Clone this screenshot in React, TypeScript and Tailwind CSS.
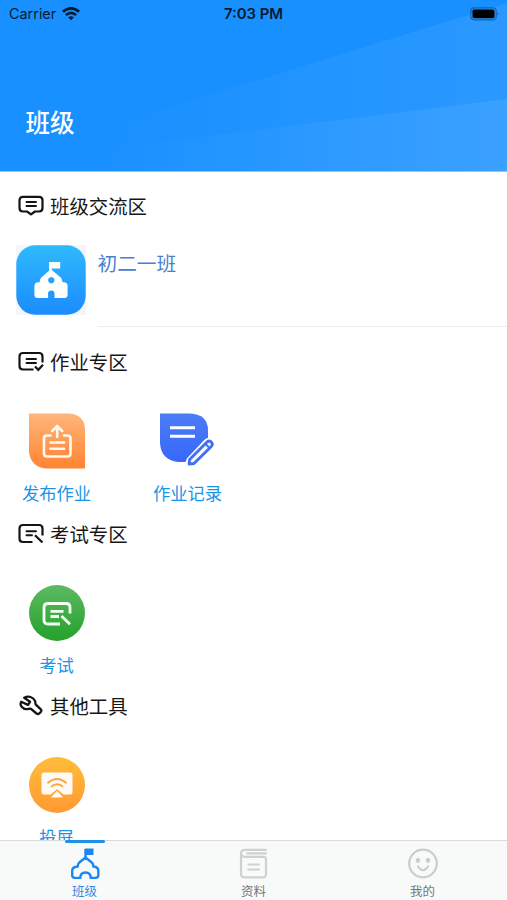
import type { ReactNode } from "react";

type Tool = {
  name: string;
  icon: ReactNode;
};

type ToolSection = {
  title: string;
  icon: ReactNode;
  tools: Tool[];
};

// Small outline icons in front of the section titles
const ChatIcon = () => (
  <svg width="26" height="22" viewBox="0 0 26 22" fill="none" stroke="#141414" strokeWidth="2.200" strokeLinejoin="round" strokeLinecap="round">
    <path d="M5 1.800h16q3.500 0 3.500 3.500v7.700q0 3.500-3.500 3.500h-4L13 19.400 9 16.500H5q-3.500 0-3.500-3.500V5.300Q1.500 1.800 5 1.800Z" />
    <path d="M8.500 7h9.500M8.500 11h9.500" strokeWidth="1.900" />
  </svg>
);

const HomeworkIcon = () => (
  <svg width="26" height="22" viewBox="0 0 26 22" fill="none" stroke="#141414" strokeWidth="2.200" strokeLinejoin="round">
    <path d="M24.500 11.500V5.500q0-3.500-3.500-3.500H5Q1.500 2 1.500 5.500v9.500q0 3.500 3.500 3.500h10.500" />
    <path d="M8.500 8h9.500M8.500 12h9.500" strokeWidth="1.900" strokeLinecap="round" />
    <path d="M17 15.500l3.300 3.300 4.700-5" strokeLinejoin="miter" />
  </svg>
);

const ExamIcon = () => (
  <svg width="26" height="22" viewBox="0 0 26 22" fill="none" stroke="#141414" strokeWidth="2.200">
    <path d="M24.500 12.500V5.500q0-3.500-3.500-3.500H5Q1.500 2 1.500 5.500v10q0 3.500 3.500 3.500h9.500" />
    <path d="M8.500 8.200h9.500M8.500 12.200h5.500" strokeWidth="1.900" strokeLinecap="round" />
    <path d="M17 12.200l7.500 7.300" />
  </svg>
);

const WrenchIcon = () => (
  <svg width="26" height="22" viewBox="0 0 26 22" fill="none" stroke="#141414" strokeWidth="2.300" strokeLinejoin="round">
    <path d="M6.200 2.700 12 6.800 10 9.900 3.200 6.700C1.200 10.200 4.600 14.400 9 14.100c1.600-.1 2.600-.8 4-.2l5.500 4.600q1.500 1.100 2.800-.1l1.700-1.700q.9-1.400-.4-2.500l-4.800-4.600c-.8-1.200-.1-2.300-.8-3.700C15.300 1.900 10.200 0.600 6.200 2.700Z" />
  </svg>
);

const PublishIcon = () => (
  <svg width="56" height="56" viewBox="0 0 56 56" fill="none">
    <defs>
      <linearGradient id="orange" x1="0" y1="0" x2="0" y2="1">
        <stop offset="0" stopColor="#ffb57c" />
        <stop offset="1" stopColor="#ff8430" />
      </linearGradient>
    </defs>
    <path d="M0 .5h40Q56 2 56 17v38.500H17Q2 54 0 39Z" fill="url(#orange)" />
    <g stroke="#fff8ef" strokeWidth="2.600" strokeLinecap="round" strokeLinejoin="round">
      <path d="M21.500 22.500H18q-3 0-3 3v15q0 3 3 3h20.500q3 0 3-3v-15q0-3-3-3H35" />
      <path d="M28.200 24V13.500M23.200 18l5-5 5 5" />
      <path d="M21.500 29.500h13.500M21.500 35.700h13.500" />
    </g>
  </svg>
);

const RecordIcon = () => (
  <svg width="56" height="56" viewBox="0 0 56 56" fill="none">
    <defs>
      <linearGradient id="indigo" x1="0" y1="0" x2="0" y2="1">
        <stop offset="0" stopColor="#4c7bf7" />
        <stop offset="1" stopColor="#3768fa" />
      </linearGradient>
    </defs>
    <path d="M0 .5h30q18 1 18 17v12L25 49h-7Q1 47 0 30Z" fill="url(#indigo)" />
    <path d="M10 14.700h25M10 23.200h25" stroke="#fff" strokeWidth="3" />
    <path d="M28.500 46.500 45.500 28.500Q49.500 25 52.500 28.500 55 32 52 34.500L35 51.200l-7.500 1Z" fill="#f4f8ff" stroke="#fff" strokeWidth="4" strokeLinejoin="round" />
    <path d="M29.600 46.500 47 29q2.300-2 4.400.1 1.900 2.200-.1 4.300L34 50.500l-4.900.5Z" fill="#f4f8ff" stroke="#406ff0" strokeWidth="2.800" strokeLinejoin="round" />
    <path d="M46 31.500l3 3" stroke="#406ff0" strokeWidth="2" />
  </svg>
);

const ExamBadgeIcon = () => (
  <svg width="56" height="56" viewBox="0 0 56 56" fill="none">
    <defs>
      <linearGradient id="green" x1="0" y1="0" x2="0" y2="1">
        <stop offset="0" stopColor="#5dba63" />
        <stop offset="1" stopColor="#24a12b" />
      </linearGradient>
    </defs>
    <circle cx="28" cy="28" r="28" fill="url(#green)" />
    <g stroke="#f7fff5" strokeWidth="2.800">
      <path d="M41 28.500V22.500q0-4-4-4H19q-4 0-4 4v12.500q0 4 4 4h12" />
      <path d="M21.500 26.300h13M21.500 31.500h8.500" />
      <path d="M32.500 31l8.500 8.200" />
    </g>
  </svg>
);

const CastIcon = () => (
  <svg width="56" height="56" viewBox="0 0 56 56" fill="none">
    <defs>
      <linearGradient id="amber" x1="0" y1="0" x2="0" y2="1">
        <stop offset="0" stopColor="#ffbd3b" />
        <stop offset="1" stopColor="#ff9a32" />
      </linearGradient>
    </defs>
    <circle cx="28" cy="28" r="28" fill="url(#amber)" />
    <path d="M15 15.500h26q2.500 0 2.500 2.500v17q0 2.500-2.500 2.500h-6.500l-6.500-5.200-6.500 5.200H15q-2.500 0-2.500-2.500V18q0-2.500 2.500-2.500Z" fill="#fffaf5" />
    <path d="M28 34.500l5.300 5.500H22.700Z" fill="#fffaf5" stroke="#fffaf5" strokeLinejoin="round" />
    <path d="M18.500 26.200q9.500-8.500 19 0M22 29.800q6-5 12 0" stroke="#f9a83c" strokeWidth="1.900" />
  </svg>
);

const SchoolIcon = () => (
  <svg width="70" height="70" viewBox="0 0 70 70">
    <defs>
      <linearGradient id="sky" x1="0" y1="0" x2="0" y2="1">
        <stop offset="0" stopColor="#2fb9fd" />
        <stop offset="1" stopColor="#1b8cfd" />
      </linearGradient>
    </defs>
    <rect width="70" height="70" fill="#f3f5fa" />
    <rect x=".3" y=".3" width="69.400" height="69.400" rx="19" fill="url(#sky)" />
    <path
      fill="#fff"
      fillRule="evenodd"
      d="M33 17h11.200v6.500h-8.400v1.500l9.200 7.800q1.400 1.500 1.400 4.500h2.200q3 .7 3 4v8.400q0 3.300-3.300 3.300H38.500v-4.500q0-3-3.200-3t-3.200 3V53H21.700q-3.300 0-3.300-3.300v-8.400q0-3.300 3-4h2.200q.1-3 1.500-4.500l7.900-7ZM35.300 32a3.200 3.200 0 1 0 .01 0Z"
    />
  </svg>
);

const WifiIcon = () => (
  <svg width="18" height="14" viewBox="0 0 18 14" fill="none" stroke="#061b30" strokeWidth="2.700">
    <path d="M.9 4.600Q9-2 17.100 4.600M3.900 8q5.100-4.300 10.200 0" />
    <path d="M9 13.200 6.200 10.400q2.800-2.200 5.600 0Z" fill="#061b30" stroke="none" />
  </svg>
);

const BatteryIcon = () => (
  <svg width="30" height="14" viewBox="0 0 30 14" fill="none">
    <rect x=".8" y=".8" width="25.400" height="12" rx="3.500" stroke="#1463af" strokeWidth="1.200" />
    <rect x="2.500" y="2.400" width="22" height="8.800" rx="1.800" fill="#000" />
    <path d="M27.500 5q2 1.800 0 3.600Z" fill="#1463af" />
  </svg>
);

const ClassTabIcon = () => (
  <svg width="30" height="32" viewBox="0 0 30 32" fill="none" stroke="#1c86f2" strokeWidth="2.400" strokeLinejoin="round">
    <path d="M15.500 9.500 9 14.700q-1.200 1.300-1.200 3.800-5.600.4-5.600 4.300v4.500q0 2.600 2.600 2.600h5.500q0-5.400 5.200-5.400t5.200 5.400h5q2.600 0 2.600-2.600v-4.500q0-3.900-5-4.300 0-2.500-1.300-3.800Z" />
    <path d="M15.500 10V1" />
    <path d="M15 .5h8.500v6.500H15Z" fill="#1c86f2" stroke="none" />
  </svg>
);

const MaterialTabIcon = () => (
  <svg width="30" height="32" viewBox="0 0 30 32" fill="none" stroke="#cfd1d1" strokeWidth="2.200" strokeLinecap="round" strokeLinejoin="round">
    <path d="M27 1.800H6Q2 1.800 2 5.300T6 8.800h18.500Q27 8.800 27 11.300v15q0 3-3 3H5q-3 0-3-3V5.300M8 5.300h19" />
    <path d="M9.500 16.500h10.500M9.500 21.500h10.500" />
  </svg>
);

const ProfileTabIcon = () => (
  <svg width="30" height="32" viewBox="0 0 30 32" fill="none" stroke="#cbcdcd" strokeWidth="2.200">
    <circle cx="15" cy="15.500" r="13.800" />
    <ellipse cx="10" cy="12.300" rx="2.200" ry="2.600" fill="#cbcdcd" stroke="none" />
    <ellipse cx="20" cy="12.300" rx="2.200" ry="2.600" fill="#cbcdcd" stroke="none" />
    <path d="M10 18.500q5 7.500 10 0" strokeLinecap="round" />
  </svg>
);

const sections: ToolSection[] = [
  {
    title: "作业专区",
    icon: <HomeworkIcon />,
    tools: [
      { name: "发布作业", icon: <PublishIcon /> },
      { name: "作业记录", icon: <RecordIcon /> },
    ],
  },
  { title: "考试专区", icon: <ExamIcon />, tools: [{ name: "考试", icon: <ExamBadgeIcon /> }] },
  { title: "其他工具", icon: <WrenchIcon />, tools: [{ name: "投屏", icon: <CastIcon /> }] },
];

const tabs = [
  { name: "班级", icon: <ClassTabIcon />, active: true },
  { name: "资料", icon: <MaterialTabIcon />, active: false },
  { name: "我的", icon: <ProfileTabIcon />, active: false },
];

function SectionTitle({ icon, title }: { icon: ReactNode; title: string }) {
  return (
    <div className="flex h-9 items-center gap-[6px] pl-[18px]">
      {icon}
      <h2 className="pt-[2px] text-[19.4px] leading-9 text-[#161616]">{title}</h2>
    </div>
  );
}

export default function App() {
  return (
    <div className="flex h-[900px] w-full flex-col overflow-hidden bg-white font-['Inter','Noto_Sans_CJK_SC',sans-serif]">
      {/* Header */}
      <header className="relative h-[172px] shrink-0 bg-[#1890ff]">
        <svg className="absolute inset-0" width="507" height="172" viewBox="0 0 507 172">
          <defs>
            <linearGradient id="beam" x1="0" x2="1">
              <stop offset="0" stopColor="#fff" stopOpacity="0" />
              <stop offset="1" stopColor="#fff" stopOpacity=".08" />
            </linearGradient>
          </defs>
          <path d="M90 132 507 3v169H90Z" fill="url(#beam)" />
          <path d="M90 151 507 99v73H90Z" fill="url(#beam)" />
          <path d="M0 171.500h507" stroke="#8ac8fb" />
        </svg>
        <div className="relative grid h-7 grid-cols-3 items-center px-[7px] text-[#061b30]">
          <div className="flex items-center gap-[6px] pl-[2px]">
            <span className="text-[14.4px]">Carrier</span>
            <WifiIcon />
          </div>
          <span className="text-center text-[14.900px] font-semibold">7:03 PM</span>
          <div className="flex justify-end">
            <BatteryIcon />
          </div>
        </div>
        <h1 className="relative pl-[25.500px] pt-[77px] text-[24.500px] font-medium leading-9 text-white">班级</h1>
      </header>

      <main className="min-h-0 flex-1 overflow-hidden">
        {/* Class list */}
        <section className="h-[172px] pt-4">
          <SectionTitle icon={<ChatIcon />} title="班级交流区" />
          <div className="flex pl-[15.500px] pt-[21px]">
            <SchoolIcon />
            <div className="ml-3 h-[82px] flex-1 border-b border-[#ededed]">
              <span className="block pt-px text-[19.7px] leading-9 text-[#4a80d2]">初二一班</span>
            </div>
          </div>
        </section>

        {sections.map((section) => (
          <section key={section.title} className="h-[172px]">
            <SectionTitle icon={section.icon} title={section.title} />
            <div className="flex pt-[33px]">
              {section.tools.map((tool) => (
                <div key={tool.name} className="flex w-[131px] flex-col items-center pr-[18px]">
                  {tool.icon}
                  <span className="mt-3 text-[17.300px] leading-[26px] text-[#1b94e8]">{tool.name}</span>
                </div>
              ))}
            </div>
          </section>
        ))}
      </main>

      {/* Tab bar */}
      <nav className="flex h-[60px] shrink-0 border-t border-[#d8dadb] bg-[#f8fafa]">
        {tabs.map((tab) => (
          <button key={tab.name} className="relative flex flex-1 flex-col items-center pt-[7px]">
            {tab.active && <span className="absolute -top-px left-1/2 h-[2.500px] w-10 -translate-x-1/2 rounded-sm bg-[#1b91ec]" />}
            {tab.icon}
            <span className={`mt-1 text-[12.5px] leading-4 ${tab.active ? "text-[#3487df]" : "text-[#747676]"}`}>{tab.name}</span>
          </button>
        ))}
      </nav>
    </div>
  );
}
